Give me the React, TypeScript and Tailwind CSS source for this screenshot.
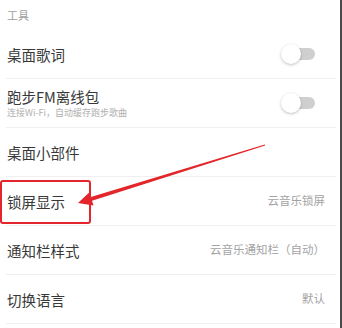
import type { ReactNode } from "react";

type Row = {
  title: string;
  subtitle?: string;
  value?: string;
  toggle?: boolean;
};

const rows: Row[] = [
  { title: "桌面歌词", toggle: true },
  { title: "跑步FM离线包", subtitle: "连接Wi-Fi，自动缓存跑步歌曲", toggle: true },
  { title: "桌面小部件" },
  { title: "锁屏显示", value: "云音乐锁屏" },
  { title: "通知栏样式", value: "云音乐通知栏（自动）" },
  { title: "切换语言", value: "默认" },
];

function Toggle() {
  return (
    <div className="relative mr-[10px] h-[20px] w-[34px] shrink-0">
      <div className="absolute left-[2px] right-0 top-[4px] h-[12px] rounded-full bg-[#cfcfcf]" />
      <div className="absolute left-0 top-0 h-[20px] w-[20px] rounded-full bg-white shadow-[0_1px_3px_rgba(0,0,0,0.25)]" />
    </div>
  );
}

function SettingRow({ row }: { row: Row }) {
  let right: ReactNode = null;
  if (row.toggle) right = <Toggle />;
  else if (row.value)
    right = <span className="text-[11.5px] text-[#a3a3a3]">{row.value}</span>;

  return (
    <div className="flex h-[49px] items-center justify-between border-b border-[#efefef] pl-[1px] pr-[11px]">
      <div className="flex flex-col gap-[2px]">
        <span className="text-[14.5px] leading-[17px] text-[#383838]">{row.title}</span>
        {row.subtitle && (
          <span className="text-[9px] leading-[11px] text-[#b0b0b0]">{row.subtitle}</span>
        )}
      </div>
      {right}
    </div>
  );
}

export default function App() {
  return (
    <div
      className="relative h-[328px] w-[342px] overflow-hidden bg-white"
      style={{ fontFamily: '"Noto Sans CJK SC", "Noto Sans", sans-serif' }}
    >
      <div className="flex h-full w-full border-r-2 border-[#4a4a4a]">
        <div className="flex w-full flex-col pl-[6px] pr-[4px]">
          <div className="flex h-[30px] items-center pl-[1px] text-[11px] text-[#a0a0a0]">
            工具
          </div>
          {rows.map((r) => (
            <SettingRow key={r.title} row={r} />
          ))}
        </div>
      </div>

      {/* annotation overlay */}
      <div className="pointer-events-none absolute left-0 top-[180px] h-[44px] w-[91px] rounded-[3px] border-2 border-[#e3262b]" />
      <svg className="pointer-events-none absolute inset-0" width="342" height="328" viewBox="0 0 342 328">
        <polygon
          points="264.85,144.52 90.8,197 89.2,192.4 78,203 93.6,205.4 92,200.8 265.15,145.48"
          fill="#e3262b"
        />
      </svg>
    </div>
  );
}
